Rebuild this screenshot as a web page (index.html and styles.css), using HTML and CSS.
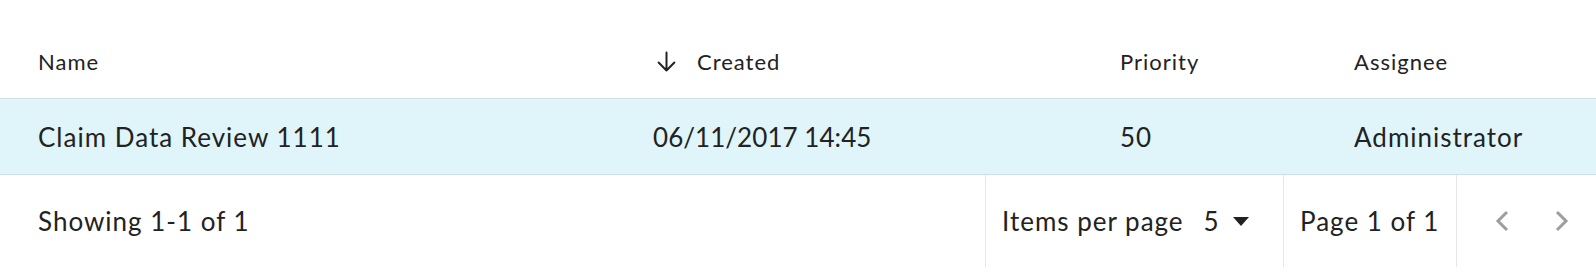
FILE: index.html
```html
<!DOCTYPE html>
<html lang="en">
<head>
<meta charset="utf-8">
<title>Tasks</title>
<link rel="stylesheet" href="styles.css">
</head>
<body>
<div class="table">
  <div class="row head">
    <div class="cell">Name</div>
    <div class="cell sorted">
      <svg class="sort-icon" viewBox="0 0 20 20" width="21" height="21" aria-hidden="true"><path d="M10 1.5V18.5M2.5 11L10 18.5L17.5 11" fill="none" stroke="#222" stroke-width="1.9" stroke-linecap="round" stroke-linejoin="round"/></svg>
      <span>Created</span>
    </div>
    <div class="cell">Priority</div>
    <div class="cell">Assignee</div>
  </div>
  <div class="row item selected">
    <div class="cell">Claim Data Review 1111</div>
    <div class="cell date">06/11/2017 14:45</div>
    <div class="cell">50</div>
    <div class="cell">Administrator</div>
  </div>
  <div class="footer">
    <div class="range">Showing 1-1 of 1</div>
    <div class="section per-page">
      <span>Items per page</span>
      <span class="select">5<span class="caret"></span></span>
    </div>
    <div class="section page">Page 1 of 1</div>
    <div class="section nav">
      <button class="nav-btn" aria-label="Previous page"><svg viewBox="0 0 14 22" width="14" height="22"><path d="M12 2L3 11L12 20" fill="none" stroke="#9e9e9e" stroke-width="3"/></svg></button>
      <button class="nav-btn" aria-label="Next page"><svg viewBox="0 0 14 22" width="14" height="22"><path d="M2 2L11 11L2 20" fill="none" stroke="#9e9e9e" stroke-width="3"/></svg></button>
    </div>
  </div>
</div>
</body>
</html>
```
FILE: styles.css
```css
html, body {
  margin: 0;
  padding: 0;
  background: #ffffff;
}
body {
  font-family: "Lato", "Open Sans", sans-serif;
  color: #222222;
}
.table {
  width: 1596px;
}
.row {
  display: grid;
  grid-template-columns: 615px 467px 234px 1fr;
  padding-left: 38px;
  align-items: center;
}
.head {
  height: 99px;
  box-sizing: border-box;
  padding-top: 24px;
  font-size: 22px;
  letter-spacing: 1px;
  border-bottom: 1px solid #cfe0e5;
}
.sorted {
  display: flex;
  align-items: center;
}
.sort-icon {
  margin-left: 3px;
  margin-right: 20px;
  flex: none;
}
.item {
  height: 75px;
  font-size: 26px;
  letter-spacing: 1px;
  border-bottom: 1px solid #cfe0e5;
}
.date {
  letter-spacing: 0.05px;
}
.selected {
  background: #e0f5f9;
}
.footer {
  display: flex;
  height: 92px;
  font-size: 26px;
  letter-spacing: 1px;
}
.range {
  flex: 1;
  display: flex;
  align-items: center;
  padding-left: 38px;
}
.section {
  display: flex;
  align-items: center;
  border-left: 1px solid #e6e6e6;
  box-sizing: border-box;
}
.per-page {
  width: 298px;
  padding-left: 16px;
}
.select {
  display: inline-flex;
  align-items: center;
  margin-left: 20px;
}
.caret {
  width: 0;
  height: 0;
  margin-left: 13px;
  border-left: 8px solid transparent;
  border-right: 8px solid transparent;
  border-top: 9px solid #222222;
}
.page {
  width: 173px;
  padding-left: 16px;
}
.nav {
  width: 140px;
  padding-left: 15px;
}
.nav-btn {
  width: 60px;
  height: 60px;
  border: 0;
  background: transparent;
  padding: 0;
  display: flex;
  align-items: center;
  justify-content: center;
  cursor: pointer;
}
```
